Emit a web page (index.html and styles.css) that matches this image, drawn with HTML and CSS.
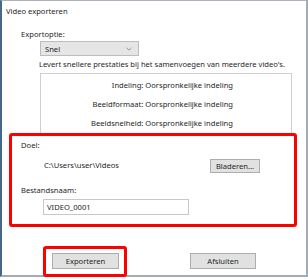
FILE: index.html
```html
<!DOCTYPE html>
<html>
<head>
<meta charset="utf-8">
<link rel="stylesheet" href="styles.css">
</head>
<body>
<div class="window">
  <div class="title">Video exporteren</div>
  <div class="label opt-label">Exportoptie:</div>
  <div class="select"><span>Snel</span><svg class="chev" width="6" height="4" viewBox="0 0 6 4"><path d="M0.5 0.8 L3 3.2 L5.5 0.8" fill="none" stroke="#8a8a8a" stroke-width="0.9"/></svg></div>
  <div class="desc">Levert snellere prestaties bij het samenvoegen van meerdere video's.</div>
  <div class="info">
    <div class="info-line">Indeling: Oorspronkelijke indeling</div>
    <div class="info-line">Beeldformaat: Oorspronkelijke indeling</div>
    <div class="info-line">Beeldsnelheid: Oorspronkelijke indeling</div>
  </div>
  <div class="highlight">
    <div class="label">Doel:</div>
    <div class="dest-row">
      <span class="path">C:\Users\user\Videos</span>
      <button class="btn browse">Bladeren...</button>
    </div>
    <div class="label name-label">Bestandsnaam:</div>
    <div class="input">VIDEO_0001</div>
  </div>
  <div class="actions">
    <div class="highlight-small"><button class="btn action">Exporteren</button></div>
    <button class="btn action close">Afsluiten</button>
  </div>
</div>
</body>
</html>
```

FILE: styles.css
```css
html, body { margin: 0; padding: 0; background: #fff; }
body { font-family: "Noto Sans", "Open Sans", sans-serif; font-size: 7.6px; color: #262626; }
.window {
  box-sizing: border-box;
  width: 308px;
  height: 277px;
  border-top: 1px solid #a9b1bd;
  border-left: 2px solid #46698b;
  border-right: 2px solid #a3abb7;
  border-bottom: 2px solid #a3abb7;
  background: #fff;
}
.title { line-height: 12px; margin-top: 4px; padding-left: 4px; }
.label { line-height: 12px; }
.opt-label { margin: 11px 0 0 19px; }
.select {
  box-sizing: border-box;
  margin: 1px 0 0 38px;
  width: 99px; height: 15px;
  border: 1px solid #bcbcbc;
  background: #e5e5e5;
  display: flex; align-items: center; justify-content: space-between;
  padding: 0 6px 0 4px;
}
.select span { line-height: 12px; }
.desc { margin: 2px 0 0 37px; line-height: 12px; white-space: nowrap; }
.info {
  box-sizing: border-box;
  margin: 3px 0 0 38px;
  width: 252px; height: 60px;
  border: 1px solid #cfcfcf; border-bottom: none;
  padding: 5px 58px 0 0;
  display: flex; flex-direction: column; gap: 7px;
  text-align: right;
}
.info-line { line-height: 12px; white-space: nowrap; }
.highlight {
  box-sizing: border-box;
  margin-left: 7px;
  width: 288px; height: 94px;
  border: 3px solid #ff0000;
  border-radius: 3px;
  padding: 3px 0 0 9px;
}
.dest-row { display: flex; align-items: flex-start; margin-top: 8px; }
.path { line-height: 12px; margin: 0 0 0 23px; width: 166px; }
.btn {
  box-sizing: border-box;
  font: inherit;
  color: #262626;
  background: #e1e1e1;
  border: 1px solid #adadad;
  padding: 0;
  line-height: 12px;
}
.browse { width: 50px; height: 14px; }
.name-label { margin-top: 11px; }
.input {
  box-sizing: border-box;
  margin: 3px 0 0 22px;
  width: 146px; height: 16px;
  border: 1px solid #c8c8c8;
  padding: 1px 3px;
  line-height: 12px;
}
.actions { display: flex; align-items: flex-start; margin-top: 19px; padding-left: 41px; }
.highlight-small {
  box-sizing: border-box;
  border: 3px solid #ff0000;
  border-radius: 3px;
  padding: 4px 5px 5px 6px;
  width: 84px; height: 31px;
}
.action { width: 67px; height: 16px; }
.close { width: 66px; margin: 7px 0 0 63px; }
```
